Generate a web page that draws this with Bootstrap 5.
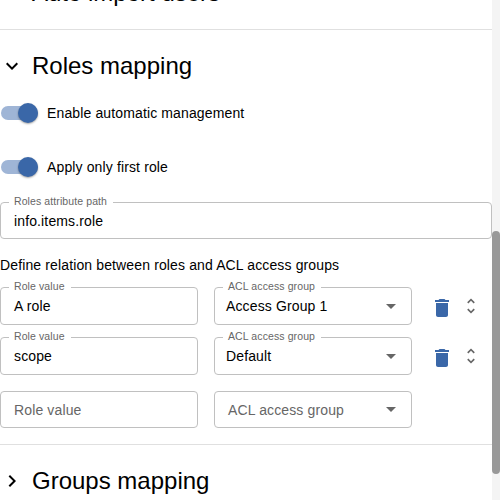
<!DOCTYPE html>
<html lang="en">
<head>
<meta charset="utf-8">
<title>Roles mapping</title>
<link href="https://cdn.jsdelivr.net/npm/bootstrap@5.3.0/dist/css/bootstrap.min.css" rel="stylesheet">
<style>
body{font-family:"Liberation Sans",Arial,sans-serif;font-size:14px;line-height:20px;letter-spacing:.131px;color:#000;height:500px}
.pane{width:492px}
.section-head{height:72px;gap:8px;border-top:1px solid #e0e0e0}
.section-head h2{font-size:24px;line-height:32px;font-weight:400;letter-spacing:0;color:#000}
.section-head.first{height:29px;border:0}
.section-head.first h2{margin:-23px 0 0 32px}
.toggle-row{height:38px;gap:9px}
.toggle-row.lead-toggle{margin-top:-7px}
.track{width:37px;height:14px;margin-left:1px;border-radius:7px;background:#9fb5d6}
.knob{width:20px;height:20px;border-radius:50%;background:#3a67a8;box-shadow:0 1px 2px rgba(0,0,0,.35)}
.field{height:38px;padding:0 13px;border:1px solid #c0c0c0;border-radius:4px}
.field.short{height:37px}
.half{width:198px}
.field-label{left:8px;top:-8px;padding:0 6px 0 5px;background:#fff;color:#666;font-size:10.5px;line-height:13px;letter-spacing:.1px}
.hint{color:#666}
.relation-title{margin:16px 0 12px}
.relation-next{margin-top:12px}
.actions{padding-left:2px;gap:7px}
.bin{margin-top:3px}
.relation-next .bin{margin-top:4px}
.thumb-track{width:8px;background:#f4f4f4;padding-top:231px}
.thumb{height:243px;border-radius:4px;background:#999}
.choice{padding:0 15px 0 11px}
.choice.hint{padding-left:13px}
</style>
<script src="https://cdn.jsdelivr.net/npm/bootstrap@5.3.0/dist/js/bootstrap.bundle.min.js"></script>
</head>
<body class="d-flex overflow-hidden bg-white">
<svg class="d-none">
  <symbol id="bin" viewBox="0 0 24 24"><path d="M6 19c0 1.100.9 2 2 2h8c1.100 0 2-.9 2-2V7H6v12zM19 4h-3.500l-1-1h-5l-1 1H5v2h14V4z"/></symbol>
  <symbol id="sort" viewBox="0 0 24 24"><path d="M12 5.830 15.170 9l1.410-1.410L12 3 7.410 7.590 8.830 9 12 5.830zm0 12.340L8.830 15l-1.410 1.410L12 21l4.590-4.590L15.170 15 12 18.170z"/></symbol>
  <symbol id="caret" viewBox="0 0 10 5"><path d="M0 0h10L5 5z"/></symbol>
</svg>
<main class="pane flex-shrink-0">
  <header class="section-head first d-flex"><h2>Auto import users</h2></header>
  <section>
    <header class="section-head d-flex align-items-center">
      <svg width="24" height="24" viewBox="0 0 24 24"><path d="M7.410 8.590 12 13.170l4.590-4.580L18 10l-6 6-6-6z"/></svg>
      <h2 class="mb-0">Roles mapping</h2>
    </header>
    <div class="toggle-row lead-toggle d-flex align-items-center">
      <span class="track d-flex align-items-center justify-content-end"><span class="knob"></span></span><span>Enable automatic management</span>
    </div>
    <div class="toggle-row d-flex align-items-center mt-3">
      <span class="track d-flex align-items-center justify-content-end"><span class="knob"></span></span><span>Apply only first role</span>
    </div>
    <div class="field short mt-3 position-relative d-flex align-items-center"><span class="field-label position-absolute">Roles attribute path</span>info.items.role</div>
    <p class="relation-title">Define relation between roles and ACL access groups</p>
    <div class="d-flex align-items-center gap-3">
      <div class="field half position-relative d-flex align-items-center"><span class="field-label position-absolute">Role value</span>A role</div>
      <div class="field half choice position-relative d-flex align-items-center justify-content-between"><span class="field-label position-absolute">ACL access group</span>Access Group 1
        <svg width="10" height="5" fill="#666"><use href="#caret"/></svg></div>
      <div class="actions d-flex align-items-center">
        <svg class="bin" width="24" height="24" fill="#3a67a8"><use href="#bin"/></svg>
        <svg width="20" height="20" fill="#666"><use href="#sort"/></svg>
      </div>
    </div>
    <div class="relation-next d-flex align-items-center gap-3">
      <div class="field half position-relative d-flex align-items-center"><span class="field-label position-absolute">Role value</span>scope</div>
      <div class="field half choice position-relative d-flex align-items-center justify-content-between"><span class="field-label position-absolute">ACL access group</span>Default
        <svg width="10" height="5" fill="#666"><use href="#caret"/></svg></div>
      <div class="actions d-flex align-items-center">
        <svg class="bin" width="24" height="24" fill="#3a67a8"><use href="#bin"/></svg>
        <svg width="20" height="20" fill="#666"><use href="#sort"/></svg>
      </div>
    </div>
    <div class="d-flex gap-3 my-3">
      <div class="field short half hint d-flex align-items-center">Role value</div>
      <div class="field short half choice hint d-flex align-items-center justify-content-between">ACL access group
        <svg width="10" height="5" fill="#666"><use href="#caret"/></svg></div>
    </div>
  </section>
  <header class="section-head d-flex align-items-center">
    <svg width="24" height="24" viewBox="0 0 24 24"><path d="M8.590 16.590 13.170 12 8.590 7.410 10 6l6 6-6 6z"/></svg>
    <h2 class="mb-0">Groups mapping</h2>
  </header>
</main>
<div class="thumb-track flex-shrink-0 h-100"><div class="thumb"></div></div>
</body>
</html>
